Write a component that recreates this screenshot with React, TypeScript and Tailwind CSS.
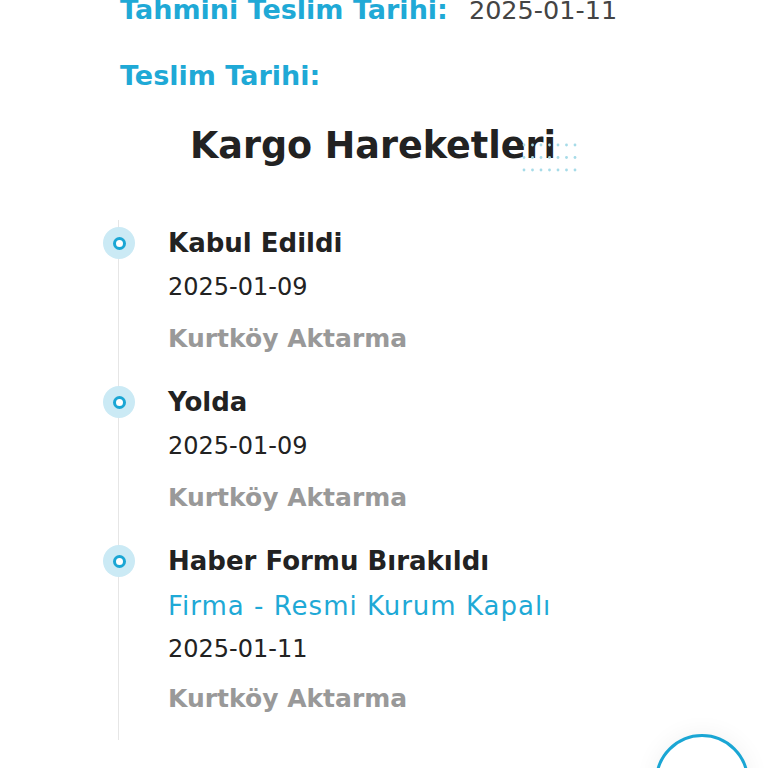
import React from "react";

type Step = {
  title: string;
  note?: string;
  date: string;
  place: string;
};

const STEPS: Step[] = [
  { title: "Kabul Edildi", date: "2025-01-09", place: "Kurtköy Aktarma" },
  { title: "Yolda", date: "2025-01-09", place: "Kurtköy Aktarma" },
  {
    title: "Haber Formu Bırakıldı",
    note: "Firma - Resmi Kurum Kapalı",
    date: "2025-01-11",
    place: "Kurtköy Aktarma",
  },
];

function DotGrid() {
  const cols = [0, 1, 2, 3, 4, 5, 6];
  const rows = [0, 1, 2];
  return (
    <svg width="56" height="32" viewBox="0 0 56 32" aria-hidden className="absolute right-[-21px] top-[20px]">
      {rows.map((r) =>
        cols.map((c) => <circle key={`${r}-${c}`} cx={3 + c * 8.5} cy={4 + r * 12.5} r="1.4" fill="#a6dbe8" />)
      )}
    </svg>
  );
}

function Marker() {
  return (
    <span className="relative z-10 flex h-8 w-8 items-center justify-center rounded-full bg-[#cbeaf5]">
      <span className="h-[13px] w-[13px] rounded-full border-[3.5px] border-[#1aa6d4] bg-white" />
    </span>
  );
}

export default function App() {
  return (
    <div
      className="relative h-[768px] w-[768px] overflow-hidden bg-white text-[#222]"
      style={{ fontFamily: "'DejaVu Sans', Inter, sans-serif" }}
    >
      <div className="pl-[120px]">
        <div className="mt-[-9px] flex items-baseline gap-[21px] leading-[38px]">
          <span className="text-[27px] font-bold text-[#1fa9d6]">Tahmini Teslim Tarihi:</span>
          <span className="text-[25.5px] text-[#444]">2025-01-11</span>
        </div>
        <div className="mt-[28px] text-[27px] font-bold leading-[38px] text-[#1fa9d6]">Teslim Tarihi:</div>
      </div>

      <div className="relative ml-[190px] mt-[26px] w-fit">
        <h2 className="relative text-[36.5px] font-bold leading-[50px] text-[#222]">Kargo Hareketleri</h2>
        <DotGrid />
      </div>

      <div className="relative ml-[103px] mt-[53px]">
        <span aria-hidden className="absolute left-[15px] top-[-4px] h-[520px] w-px bg-[#e6e6e6]" />
        <ol className="flex flex-col gap-[25px]">
          {STEPS.map((s) => (
            <li key={s.title} className="flex gap-[33px]">
              <div className="pt-[3px]">
                <Marker />
              </div>
              <div className="flex flex-col">
                <span className="text-[26px] font-bold leading-[38px] text-[#222]">{s.title}</span>
                {s.note && (
                  <span className="mt-[7px] text-[26px] leading-[38px] tracking-[1px] text-[#1fa9d6]">{s.note}</span>
                )}
                <span className={`text-[24px] leading-[38px] text-[#222] ${s.note ? "mt-[5px]" : "mt-[6px]"}`}>
                  {s.date}
                </span>
                <span
                  className={`text-[25px] font-bold leading-[38px] text-[#999] ${s.note ? "mt-[12px]" : "mt-[14px]"}`}
                >
                  {s.place}
                </span>
              </div>
            </li>
          ))}
        </ol>
      </div>

      <div className="absolute left-[655px] top-[734px] h-[94px] w-[94px] rounded-full border-[3px] border-[#1aa6d4] bg-white shadow-[0_0_24px_rgba(0,0,0,0.06)]" />
    </div>
  );
}
